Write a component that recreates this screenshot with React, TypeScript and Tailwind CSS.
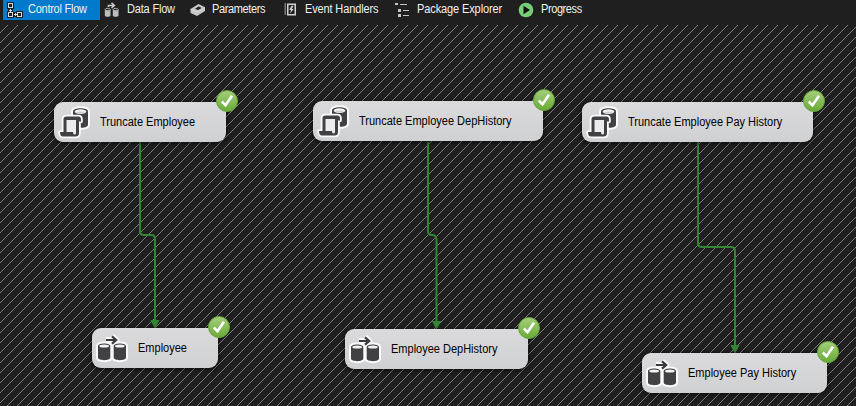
import type { ReactNode } from "react";

function ControlFlowIcon() {
  return (
    <svg width="18" height="18" viewBox="0 0 18 18" fill="none" shapeRendering="crispEdges">
      <path d="M1 1h7v7H7v3h3v-1h7v7h-7v-1H8v1H1v-7h1V8H1z" fill="#1f1f1f" />
      <path d="M2.500 2.500h4v4h-4zM2.500 11.500h4v4h-4zM11.500 11.500h4v4h-4z" stroke="#d8d8d8" />
      <path d="M4 8h1v3H4zM3 9h3v1H3zM8 13h3v1H8zM9 12h1v3H9z" fill="#d8d8d8" />
    </svg>
  );
}

function DataFlowIcon() {
  return (
    <svg width="16" height="16" viewBox="0 0 16 16">
      <path d="M.8 7.500v6c0 1.800 5.700 1.800 5.700 0v-6zM8.800 7.500v6c0 1.800 5.700 1.800 5.700 0v-6z" fill="#bcbcbc" />
      <ellipse cx="3.650" cy="7.500" rx="2.500" ry="1.200" fill="#2b2b2b" stroke="#c8c8c8" strokeWidth=".8" />
      <ellipse cx="11.650" cy="7.500" rx="2.500" ry="1.200" fill="#2b2b2b" stroke="#c8c8c8" strokeWidth=".8" />
      <path d="M4.500 5V3.500H10M7.500 .8L10.300 3.500 7.500 6" fill="none" stroke="#c8c8c8" strokeWidth="1.600" />
    </svg>
  );
}

function ParametersIcon() {
  return (
    <svg width="16" height="14" viewBox="0 0 16 14">
      <path d="M.5 6L8.500 1 15 4.300V8L7 13 .5 10z" fill="#c6c6c6" />
      <path d="M5 5.800L8.700 3.500l3 1.500L8 7z" fill="#1f1f1f" />
      <path d="M.5 6.200l6.500 3 8-4.700" fill="none" stroke="#dedede" strokeWidth=".6" />
    </svg>
  );
}

function EventsIcon() {
  return (
    <svg width="13" height="14" viewBox="0 0 13 14" fill="none">
      <path d="M3.750 1.250h7.500v10.500h-7.500z" stroke="#d0d0d0" strokeWidth="1.500" />
      <path d="M1.250 .5v12" stroke="#d0d0d0" strokeWidth="1.500" strokeDasharray="1 1" />
      <path d="M7.500 2.800L5.200 7h1.900L6 10.500 9.700 6H7.900l1.600-3.200z" fill="#d0d0d0" />
    </svg>
  );
}

function ExplorerIcon() {
  return (
    <svg width="15" height="15" viewBox="0 0 15 15" shapeRendering="crispEdges">
      <path d="M0 0h3v2H0zM5 1h7v1H5zM3 6h3v3H3zM8 7h6v1H8zM3 11h3v3H3zM8 12h6v1H8z" fill="#c4c4c4" />
    </svg>
  );
}

function ProgressIcon() {
  return (
    <svg width="16" height="16" viewBox="0 0 16 16">
      <circle cx="8" cy="8" r="7.300" fill="#76ce78" />
      <path d="M5.500 3.800L12 8l-6.500 4.200z" fill="#111" />
    </svg>
  );
}

function Tab({ className, icon, label }: { className: string; icon: ReactNode; label: string }) {
  return (
    <div className={`flex h-5 shrink-0 items-center whitespace-nowrap text-[12px] leading-[18px] text-[#f1f1f1] ${className}`}>
      {icon}
      <span className="-mt-0.5 origin-left scale-x-[0.917]">{label}</span>
    </div>
  );
}

function TruncateGlyph() {
  const cylinder = "M19 9.500c0-4.300 15-4.300 15 0v13c0 3.200-7 4-10 2.500L19 20z";
  const scroll = "M9.500 17q0-2.500 3-2.500h12q2.500 0 2.500 3v2H25V31q0 3.500-3.500 3.500H9q-3 0-3-4.500h3.500z";
  return (
    <svg className="shrink-0" width="40" height="40" viewBox="0 0 40 40">
      <path d={cylinder} fill="#fafafa" stroke="#fafafa" strokeWidth="4" strokeLinejoin="round" />
      <path d={cylinder} fill="#414143" />
      <ellipse cx="26.500" cy="9.600" rx="5.800" ry="2.300" fill="#f5f5f5" />
      <ellipse cx="26.500" cy="10.600" rx="4" ry="1.200" fill="#cfcfd1" />
      <path d={scroll} fill="#fafafa" stroke="#fafafa" strokeWidth="3.600" strokeLinejoin="round" />
      <path d={scroll} fill="#414143" />
      <path d="M12.500 18h9.500v13q0 1.500-1.500 1.500t-1.500-2.500h-6.500z" fill="#ececee" />
    </svg>
  );
}

function DataFlowGlyph() {
  const left = "M6 18c0-3.500 12.300-3.500 12.300 0v11.500c0 3.500-12.300 3.500-12.300 0z";
  const right = "M21.700 18c0-3.500 12.300-3.500 12.300 0v11.500c0 3.500-12.300 3.500-12.300 0z";
  const arrow = "M14 12h10M20 8.300l4.200 3.700-4.200 3.700";
  return (
    <svg className="shrink-0" width="40" height="40" viewBox="0 0 40 40">
      <path d={left + right} fill="#fafafa" stroke="#fafafa" strokeWidth="4" strokeLinejoin="round" />
      <path d={arrow} fill="none" stroke="#fafafa" strokeWidth="6" strokeLinejoin="round" />
      <path d={left + right} fill="#414143" />
      <ellipse cx="12.150" cy="18" rx="4.900" ry="1.600" fill="#f2f2f2" />
      <ellipse cx="27.850" cy="18" rx="4.900" ry="1.600" fill="#f2f2f2" />
      <path d={arrow} fill="none" stroke="#39393b" strokeWidth="2.200" />
    </svg>
  );
}

function SuccessBadge() {
  return (
    <svg className="absolute -right-3 -top-3" width="22" height="22" viewBox="0 0 22 22">
      <defs>
        <linearGradient id="success" x1="0" y1="0" x2="0" y2="1">
          <stop offset="0" stopColor="#a5cf7c" />
          <stop offset="1" stopColor="#68aa36" />
        </linearGradient>
      </defs>
      <circle cx="11" cy="11" r="10.500" fill="url(#success)" stroke="#65a338" />
      <path d="M5.800 11.500l3.700 3.800 6.500-9.500" fill="none" stroke="#fff" strokeWidth="2.600" />
    </svg>
  );
}

function Task({ className, label, truncate }: { className: string; label: string; truncate?: boolean }) {
  return (
    <div className={`absolute flex h-10 items-center whitespace-nowrap rounded-[9px] bg-linear-to-b from-[#dadadc] to-[#d0d1d3] shadow-[0_1px_4px_1px_rgba(0,0,0,0.5)] ${className}`}>
      {truncate ? <TruncateGlyph /> : <DataFlowGlyph />}
      <span className="ml-1.5 origin-left scale-x-[0.917] text-[12px] leading-4 text-black">{label}</span>
      <SuccessBadge />
    </div>
  );
}

function Connectors() {
  return (
    <svg className="absolute inset-0" width="856" height="381" viewBox="0 25 856 381">
      <defs>
        <pattern id="hatch" width="10" height="10" patternUnits="userSpaceOnUse">
          {Array.from({ length: 10 }, (_, y) => (
            <rect key={y} x={(12 - y) % 10} y={y} width="1" height="1" fill="#808080" />
          ))}
        </pattern>
      </defs>
      <rect y="25" width="856" height="381" fill="url(#hatch)" shapeRendering="crispEdges" />
      <g fill="none" stroke="#338533" strokeWidth="2">
        <path d="M140 142v89q0 4 4 4h7q4 0 4 4v83" />
        <path d="M428 142v89q0 4 4 4t4.500 4v84" />
        <path d="M698 142v101q0 4 4 4h29q4 0 4 4v96" />
      </g>
      <path d="M150.500 320h9l-4.500 9zM432 321h9l-4.500 9zM730.500 345h9l-4.500 9z" fill="#338533" />
    </svg>
  );
}

export default function App() {
  return (
    <div className="flex h-[406px] w-[856px] flex-col overflow-hidden bg-[#1f1f1f] font-['Liberation_Sans',Arial,sans-serif]">
      <nav className="flex h-[25px] items-start pl-[3px]">
        <Tab className="w-[97px] gap-[4px] bg-[#007acc] pl-[3px] tracking-[-0.28px]" icon={<ControlFlowIcon />} label="Control Flow" />
        <Tab className="w-[90px] gap-[7px] pl-[4px] tracking-[-0.2px]" icon={<DataFlowIcon />} label="Data Flow" />
        <Tab className="w-[93px] gap-[6px] tracking-[-0.4px]" icon={<ParametersIcon />} label="Parameters" />
        <Tab className="w-[112px] gap-[8px] pl-[1px] tracking-[-0.15px]" icon={<EventsIcon />} label="Event Handlers" />
        <Tab className="w-[123px] gap-[7px] tracking-[-0.12px]" icon={<ExplorerIcon />} label="Package Explorer" />
        <Tab className="gap-[7px] tracking-[-0.45px]" icon={<ProgressIcon />} label="Progress" />
      </nav>
      <main className="relative flex-1">
        <Connectors />
        <Task truncate className="left-[54px] top-[77px] w-[172px]" label="Truncate Employee" />
        <Task truncate className="left-[313px] top-[76px] w-[230px]" label="Truncate Employee DepHistory" />
        <Task truncate className="left-[582px] top-[77px] w-[231px]" label="Truncate Employee Pay History" />
        <Task className="left-[92px] top-[303px] w-[126px]" label="Employee" />
        <Task className="left-[345px] top-[304px] w-[183px]" label="Employee DepHistory" />
        <Task className="left-[642px] top-[328px] w-[185px]" label="Employee Pay History" />
      </main>
    </div>
  );
}
